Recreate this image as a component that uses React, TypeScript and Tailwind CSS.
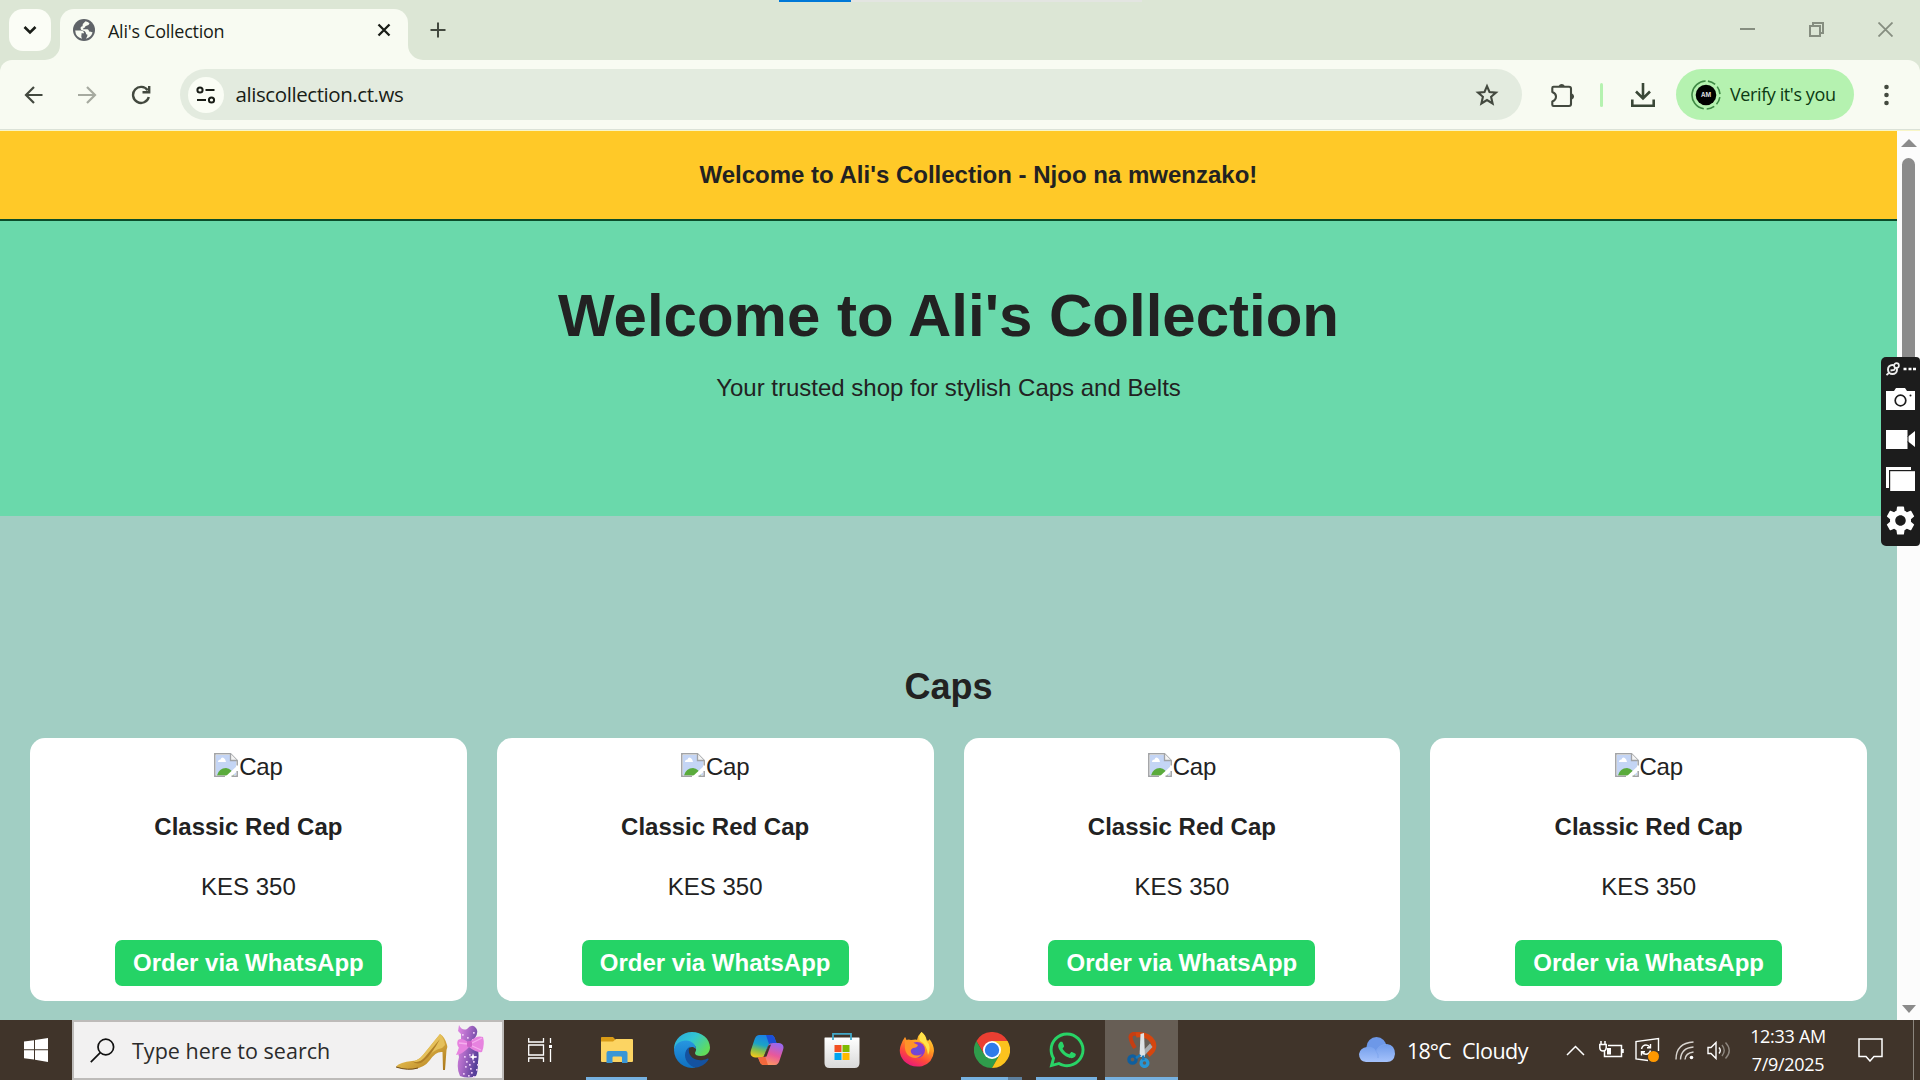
import React from "react";
import { FaWhatsapp } from "react-icons/fa";
import { MdSettings } from "react-icons/md";

const ui = "font-['Open_Sans','Noto_Sans',sans-serif]";

function TabStrip() {
  return (
    <div className="relative flex h-[60px] shrink-0 bg-[#dce6d5]">
      <div className="absolute left-[779px] top-0 flex h-[2px] w-[363px] bg-[#e3e5e1]">
        <div className="h-full w-[72px] bg-[#0078d7]" />
      </div>
      <div className="ml-[9px] mt-[9px] flex h-[42px] w-[42px] items-center justify-center rounded-[14px] bg-[#fbfdf6]">
        <svg width="14" height="10" viewBox="0 0 14 10" fill="none" stroke="#191d17" strokeWidth="2.6">
          <path d="M1.5 2 7 7.5 12.500 2" />
        </svg>
      </div>
      <div className="relative ml-[9px] mt-[9px] flex h-[51px] w-[348px] items-center rounded-t-[14px] bg-[#f8fbf2] pb-[9px]">
        <svg className="absolute -left-[15px] bottom-0" width="15" height="15">
          <path d="M15 0V15H0A15 15 0 0 0 15 0Z" fill="#f8fbf2" />
        </svg>
        <svg className="absolute -right-[15px] bottom-0" width="15" height="15">
          <path d="M0 0V15H15A15 15 0 0 1 0 0Z" fill="#f8fbf2" />
        </svg>
        <svg className="ml-[13px]" width="22" height="22" viewBox="0 0 22 22">
          <circle cx="11" cy="11" r="11" fill="#5f6368" />
          <path d="M11.500 2.200Q9.500 3 9.500 5 7.500 5 7.500 7.500 7.500 8.500 9 8.500H12.500Q14 8.500 14 10.200 14 11.500 15.500 11.500H19.800A8.900 8.900 0 0 0 11.500 2.200Z" fill="#5f6368" />
          <path d="M2.200 11.500H7.500Q11 11.500 11 14.200H8.500V16.500H8.200Q8.200 18 9 19.700A8.900 8.900 0 0 1 2.200 11.500Z" fill="#f8fbf2" />
          <path d="M12.500 2.300Q15 2.800 16.500 4.200 16 6.500 13.500 6.800 12 6.800 12 8.500 10 8.500 10 10.300H14.500Q16 10.500 16 12.500 18 12.500 19.600 13.500 18 18.500 13 19.700 14.500 17.500 14.500 15.800 12.800 15.500 12.800 13.700 12.500 12 9.500 11.500 7.500 11 7.500 9 7.500 7.200 9.500 7.200 9.500 4.500 12.500 2.300Z" fill="#f8fbf2" />
        </svg>
        <span className="ml-[13px] mt-[2px] whitespace-nowrap text-[18px] leading-6 tracking-[-0.26px] text-[#191d17]">Ali's Collection</span>
        <svg className="absolute left-[317px] top-[14px]" width="14" height="14" fill="none" stroke="#191d17" strokeWidth="2.3">
          <path d="M1.500 1.500 12.500 12.500M12.500 1.500 1.500 12.500" />
        </svg>
      </div>
      <svg className="ml-[22px] mt-[22px]" width="16" height="16" fill="none" stroke="#43493f" strokeWidth="2">
        <path d="M8 .5V15.500M.5 8H15.500" />
      </svg>
      <div className="ml-auto mr-[27px] flex items-start gap-[54px] pt-[22px]">
        <svg width="15" height="15"><path d="M0 7H15" stroke="#868e80" strokeWidth="2" /></svg>
        <svg width="15" height="15" fill="none" stroke="#868e80" strokeWidth="2">
          <path d="M1 4H11V14H1ZM4 4V1H14V11H11" />
        </svg>
        <svg width="15" height="15" fill="none" stroke="#868e80" strokeWidth="1.8">
          <path d="M.5 .5 14.500 14.500M14.500 .5 .5 14.500" />
        </svg>
      </div>
    </div>
  );
}

function Toolbar() {
  return (
    <div className="h-[71px] shrink-0 bg-[#dce6d5]">
      <div className="flex h-[71px] items-center rounded-t-[12px] border-b border-[#f8f6c8] bg-[#f8fbf2]">
        <div className="flex h-[70px] w-full items-center border-b border-[#dbe2d8]">
          <svg className="ml-[24px]" width="19" height="18" fill="none" stroke="#43493f" strokeWidth="2.2">
            <path d="M18.500 9H2M10 1 2 9 10 17" />
          </svg>
          <svg className="ml-[35px]" width="19" height="18" fill="none" stroke="#a6aaa0" strokeWidth="2.2">
            <path d="M0 9H17M9 1 17 9 9 17" />
          </svg>
          <svg className="ml-[34px]" width="20" height="20" fill="none" stroke="#43493f" strokeWidth="2.4">
            <path d="M16.700 5.400A8 8 0 1 0 17.800 12" />
            <path d="M18.200 1V7.200H11.500" />
          </svg>
          <div className="ml-[29px] flex h-[51px] w-[1342px] items-center rounded-full bg-[#e3ebdf]">
            <div className="ml-[8px] flex h-[36px] w-[36px] items-center justify-center rounded-full bg-[#fafdf5]">
              <svg width="20" height="18" fill="none" stroke="#191d17" strokeWidth="2">
                <circle cx="4" cy="4" r="2.600" />
                <path d="M9.500 4H18.500M1 14H10" />
                <circle cx="15.500" cy="14" r="2.600" />
              </svg>
            </div>
            <span className="ml-[11.500px] -mt-[2px] whitespace-nowrap text-[20.500px] leading-7 tracking-[-0.42px] text-[#191d17]">aliscollection.ct.ws</span>
            <svg className="ml-auto mr-[23px]" width="24" height="24" viewBox="0 0 24 24" fill="none" stroke="#43493f" strokeWidth="2.1">
              <path d="M12 3.200 14.500 9 21 9.600 16.100 13.800 17.600 20.500 12 17 6.400 20.500 7.900 13.800 3 9.600 9.500 9Z" />
            </svg>
          </div>
          <svg className="ml-[28px]" width="26" height="26" viewBox="0 0 26 26">
            <path d="M3.500 4.800H19Q21 4.800 21 6.800V22Q21 24 19 24H3.500Q2.300 24 2.300 22.800V19.500Q6 18 6 14.500 6 11.500 2.300 10V6Q2.300 4.800 3.500 4.800Z" fill="none" stroke="#43493f" strokeWidth="2.1" strokeLinejoin="round" />
            <path d="M8.700 4A3.200 3.200 0 0 1 14.700 4ZM22 11.500A3.200 3.200 0 0 1 22 17.500Z" fill="#43493f" />
          </svg>
          <div className="ml-[24px] h-[24px] w-[3px] rounded-full bg-[#b5f2b0]" />
          <svg className="ml-[28px]" width="24" height="24" fill="none" stroke="#3a4737" strokeWidth="2.600">
            <path d="M12 0V14.500M5 8.500 12 15.500 19 8.500M1.300 16.500V22.700H22.700V16.500" />
          </svg>
          <div className="ml-[21px] flex h-[51px] w-[178px] shrink-0 items-center rounded-full bg-[#b5f2b0]">
            <svg className="ml-[15px] shrink-0" width="30" height="30" viewBox="0 0 30 30">
              <circle cx="15" cy="15" r="14" fill="none" stroke="#3f8a45" strokeWidth="1.600" strokeDasharray="8 3 8 3 8 3 8 3 41 3" transform="rotate(-82 15 15)" />
              <circle cx="15" cy="15" r="10.300" fill="#000" />
              <text x="15" y="17.300" textAnchor="middle" fontSize="6" fontWeight="700" fill="#ddd" fontFamily="Inter, sans-serif">AM</text>
            </svg>
            <span className="-mt-[2px] ml-[9px] whitespace-nowrap text-[18px] leading-6 tracking-[-0.4px] text-[#0c3a13]">Verify it's you</span>
          </div>
          <svg className="ml-[30px]" width="5" height="22" fill="#43493f">
            <circle cx="2.500" cy="3" r="2.300" /><circle cx="2.500" cy="11" r="2.300" /><circle cx="2.500" cy="19" r="2.300" />
          </svg>
        </div>
      </div>
    </div>
  );
}

function BrokenImage() {
  return (
    <svg width="24" height="24" viewBox="0 0 24 24">
      <path d="M.5 .5H16.500L23.500 7.500V23.500H.5Z" fill="#fff" />
      <path d="M2 2H16L22 8V22H2Z" fill="#c4d5f5" />
      <path d="M4 9Q4 6.500 6.500 6.500 7.500 3.500 9.800 5 11.500 6 12 9Z" fill="#fff" />
      <path d="M3 22.500Q5 15 12 15 18 15.500 20 22.500Z" fill="#5aab3c" />
      <path d="M11 24 24 12V17.500L17 24Z" fill="#fff" />
      <path d="M11 23.200H.8V.8H16.500L23.200 7.500V12.500M23.200 18V23.200H17.500" fill="none" stroke="#a1a3a6" strokeWidth="1.500" />
      <path d="M16.500 .8V7.500H23.200" fill="#f4f4f4" stroke="#a1a3a6" strokeWidth="1.300" />
    </svg>
  );
}

function ProductCard() {
  return (
    <div className="flex h-[263px] flex-1 flex-col items-center rounded-[15px] bg-white pt-[15px] text-2xl leading-7 text-[#222]">
      <div className="flex h-7">
        <BrokenImage />
        <span className="ml-[1px] tracking-[-0.3px]">Cap</span>
      </div>
      <h3 className="mt-[32px] h-7 font-bold">Classic Red Cap</h3>
      <p className="mt-8 h-7">KES 350</p>
      <a className="mt-[39px] flex h-[46px] w-[267px] items-center justify-center rounded-[7px] bg-[#25d366] font-bold text-white">
        Order via WhatsApp
      </a>
    </div>
  );
}

function Page() {
  return (
    <div className="flex min-h-0 flex-1">
      <main className="flex w-[1897px] flex-col bg-[#a1cec3] font-['Liberation_Sans',Arial,sans-serif] text-[#222]">
        <div className="flex h-[90px] items-center border-b-2 border-[#0b4d2a] bg-[#ffc928] pl-[699.500px] text-2xl font-bold">
          <span className="whitespace-nowrap pb-px">Welcome to Ali's Collection - Njoo na mwenzako!</span>
        </div>
        <header className="flex h-[295px] flex-col items-center bg-[#6ad9ab] pt-[61px]">
          <h1 className="text-[60px] font-bold leading-[68px]">Welcome to Ali's Collection</h1>
          <p className="mt-[24px] text-2xl leading-7">Your trusted shop for stylish Caps and Belts</p>
        </header>
        <h2 className="mt-[150px] text-center text-4xl font-bold leading-[42px]">Caps</h2>
        <div className="mt-[30px] flex gap-[30px] px-[30px]">
          <ProductCard /><ProductCard /><ProductCard /><ProductCard />
        </div>
      </main>
      <div className="flex w-[23px] flex-col items-center bg-[#fcfcfc] pt-[8px]">
        <svg width="16" height="8"><path d="M0 8 8 0 16 8Z" fill="#8b8b8b" /></svg>
        <div className="mt-[11px] h-[260px] w-[13px] rounded-full bg-[#8b8b8b]" />
        <svg className="mb-[7px] mt-auto" width="14" height="8"><path d="M0 0 7 8 14 0Z" fill="#8b8b8b" /></svg>
      </div>
    </div>
  );
}

function CaptureWidget() {
  return (
    <div className="absolute right-0 top-[357px] flex h-[189px] w-[39px] flex-col items-center rounded-l-[5px] rounded-r-[4px] bg-[#1c1c1c]">
      <svg className="mt-[5px]" width="30" height="14" viewBox="0 0 30 14" fill="none">
        <circle cx="6.500" cy="7.500" r="4.500" stroke="#eee" strokeWidth="2" />
        <path d="M.5 13 3.500 10.500M4.500 8.500 8 8 10 5" stroke="#eee" strokeWidth="1.800" />
        <circle cx="10.500" cy="3.500" r="2.400" fill="#1c1c1c" stroke="#eee" strokeWidth="1.700" />
        <path d="M17.500 7H20.500M22.500 7H25.500M27 7H30" stroke="#fff" strokeWidth="2.600" />
      </svg>
      <svg className="mt-[12px]" width="29" height="22" viewBox="0 0 29 22">
        <path d="M0 3H8L10 0H19L21 3H29V22H0Z" fill="#fff" />
        <circle cx="14.500" cy="12.500" r="5.300" fill="none" stroke="#1c1c1c" strokeWidth="1.700" />
        <circle cx="24.500" cy="7.500" r="1" fill="#1c1c1c" />
      </svg>
      <svg className="mt-[20px]" width="29" height="19" viewBox="0 0 29 19" fill="#fff">
        <path d="M0 0H21.500V7L29 1V17L21.500 11V19H0Z" />
        <path d="M22 6V12.500" stroke="#1c1c1c" strokeWidth="1" />
      </svg>
      <svg className="mt-[18px]" width="29" height="24" viewBox="0 0 29 24">
        <path d="M0 0H25V3H3V21H0Z" fill="#fff" />
        <path d="M4.200 4.200H29V24H4.200Z" fill="#fff" />
      </svg>
      <MdSettings className="mr-px mt-[12px] h-[35px] w-[35px] shrink-0 text-white" />
    </div>
  );
}

function Shoe() {
  return (
    <svg className="absolute left-[322px] top-[12px]" width="52" height="38" viewBox="0 0 52 38">
      <defs>
        <linearGradient id="gold" x1="0" y1="0" x2="1" y2="1">
          <stop offset="0" stopColor="#f4dc83" /><stop offset=".5" stopColor="#d9ad42" /><stop offset="1" stopColor="#a87519" />
        </linearGradient>
      </defs>
      <path d="M44 0Q49 3 51 11 52 13 50.500 16L49 36H47L46.500 18Q40 17 34 26 28 34 18 35 6 36 0 32.500 4 28 16 27 22 27 27 21Z" fill="url(#gold)" />
      <path d="M44 0Q48 4 49 11L46 14Q36 16 28 27 24 30 16 27 22 27 27 21Z" fill="#e5c05a" />
      <path d="M16 27Q23 30 29 23L44 5Q36 20 28 27 22 32 16 27Z" fill="#b18027" />
      <path d="M0 33Q12 37 22 34" fill="none" stroke="#6f4a16" strokeWidth="1" />
    </svg>
  );
}

const sequins = [
  [9, 33], [14, 31], [18, 38], [10, 43], [15, 45], [21, 46], [8, 50], [13, 52], [18, 53], [22, 41], [20, 33], [11, 38], [16, 49], [7, 11], [12, 14], [18, 9], [17, 16], [14, 41],
];

function Dress() {
  return (
    <svg className="absolute left-[382px] top-[2px]" width="32" height="54" viewBox="0 0 32 54">
      <defs>
        <linearGradient id="gown" x1="0" y1="0" x2="1" y2=".5">
          <stop offset="0" stopColor="#e58be6" /><stop offset=".5" stopColor="#a767c4" /><stop offset="1" stopColor="#57409a" />
        </linearGradient>
      </defs>
      <path d="M3 1Q6 7 11 5 16-1 20 4 23 8 19 14V19Q24 26 22 38 22 48 20 52 12 55 4 52 0 44 3 33 1 26 5 19L5 10 2 7Z" fill="url(#gown)" />
      {sequins.map(([x, y], i) => (
        <rect key={i} x={x - 1} y={y - 1} width="1.700" height="1.700" fill="#ecc8f5" />
      ))}
      <path d="M13 19Q6 13 2 16 0 20 3 24L0 31Q7 30 13 23Q20 29 26 28 29 20 27 13 20 11 14 18Z" fill="#e783df" />
      <path d="M14 20 26 14M14 21 25 26M12 20 3 19" stroke="#f5aeee" strokeWidth="1.300" />
      <rect x="11" y="17" width="5" height="6" rx="1.500" fill="#cf62c9" />
      <path d="M17 29 18 32 21 33 18 34 17 37 16 34 13 33 16 32Z" fill="#fff" />
    </svg>
  );
}

function FolderIcon() {
  return (
    <svg width="36" height="36" viewBox="0 0 36 36">
      <path d="M2 5.500Q2 5 3 5H14L17 8H33Q34 8 34 9V14H2Z" fill="#d99b16" />
      <path d="M2 9.500H14L17 7H33Q34 7 34 8V29Q34 30 33 30H3Q2 30 2 29Z" fill="#fcd462" />
      <path d="M7.500 31V21Q7.500 19 9.500 19H26.500Q28.500 19 28.500 21V31H23V25.500Q23 24.500 22 24.500H14.500Q13.500 24.500 13.500 25.500V31Z" fill="#3a96d5" />
    </svg>
  );
}

function EdgeIcon() {
  return (
    <svg width="36" height="36" viewBox="0 0 36 36">
      <defs>
        <linearGradient id="eTop" x1="0" y1="0" x2="1" y2=".6"><stop offset="0" stopColor="#2aa7dc" /><stop offset=".5" stopColor="#32c5d4" /><stop offset="1" stopColor="#61dc5a" /></linearGradient>
        <linearGradient id="eMid" x1="0" y1="0" x2="0" y2="1"><stop offset="0" stopColor="#2796e0" /><stop offset="1" stopColor="#0f70c0" /></linearGradient>
      </defs>
      <path d="M0 16.500A18 17 0 0 1 18 0C28 0 36 7 36 15.500 36 20.500 32 24 27 24 22 24 20 22 21.500 19.800 23 17 22 11 14 10.500 7 10 2 13 0 18Z" fill="url(#eTop)" />
      <path d="M0 18C1 12 6 8.500 12 8.500 18 8.500 22 13 22 17 18 12.500 12 16 12 22 12 29 17 34 22 35.500A18 18 0 0 1 0 18Z" fill="url(#eMid)" />
      <path d="M16 14.500C10 18 9.500 26 14 31 17 35 22 36.500 26 34.500 30 33 33 30 34.500 27.500 35 26.500 34 26.200 33 26.700 26 30 18 27.500 15.500 22 14.500 19 14.500 17 16 14.500Z" fill="#1452a0" />
    </svg>
  );
}

function CopilotIcon() {
  return (
    <svg width="36" height="36" viewBox="0 0 36 36">
      <defs>
        <linearGradient id="cpA" x1=".6" y1="0" x2=".3" y2="1"><stop offset="0" stopColor="#1b7fe8" /><stop offset=".45" stopColor="#1ba3c7" /><stop offset=".7" stopColor="#80bd4f" /><stop offset="1" stopColor="#f2c81c" /></linearGradient>
        <linearGradient id="cpB" x1=".7" y1="0" x2=".3" y2="1"><stop offset="0" stopColor="#9868f0" /><stop offset=".5" stopColor="#e8589b" /><stop offset="1" stopColor="#ffa05a" /></linearGradient>
      </defs>
      <path d="M10 3H22Q25 3 26 7L27.500 11H23Q20 11 18.500 15L15 24Q14 25.500 11 25.500H6Q0 25 2 18L5 9Q6.500 3 10 3Z" fill="url(#cpA)" />
      <path d="M17 3H22Q25 3 26 7L27.500 11H23L20 12Z" fill="#1c4ed8" />
      <path d="M26 33H15Q11.500 33 10.500 29L9 25.500H12Q15 25.500 16.500 21L19.500 13Q20.500 11 24 11H30Q36 12 34 18L31 27Q29.500 33 26 33Z" fill="url(#cpB)" />
      <path d="M19 33H15Q11.500 33 10.500 29L9 25.500H12L16 24Z" fill="#f2683c" />
      <path d="M19.500 13.500 22 12.500 17.500 24.500 14.500 25Z" fill="#40342a" />
    </svg>
  );
}

function StoreIcon() {
  return (
    <svg width="36" height="36" viewBox="0 0 36 36">
      <defs><linearGradient id="bag" x1="0" y1="0" x2="0" y2="1"><stop offset="0" stopColor="#fff" /><stop offset="1" stopColor="#d9d9d9" /></linearGradient></defs>
      <path d="M.5 6Q.5 5.500 1 5.500H35Q35.500 5.500 35.500 6V31Q35.500 36 30.500 36H5.500Q.5 36 .5 31Z" fill="url(#bag)" />
      <path d="M9 8V1.800H27V8" fill="none" stroke="#43a9c9" strokeWidth="1.800" />
      <path d="M10.500 13H17.500V20H10.500Z" fill="#f25022" /><path d="M18.500 13H25.500V20H18.500Z" fill="#7fba00" />
      <path d="M10.500 21H17.500V28H10.500Z" fill="#00a4ef" /><path d="M18.500 21H25.500V28H18.500Z" fill="#ffb900" />
    </svg>
  );
}

function FirefoxIcon() {
  return (
    <svg width="36" height="36" viewBox="0 0 36 36">
      <defs>
        <linearGradient id="fx" x1=".8" y1="0" x2=".3" y2="1"><stop offset="0" stopColor="#ffe03a" /><stop offset=".4" stopColor="#ff9a20" /><stop offset=".7" stopColor="#ff4a3a" /><stop offset="1" stopColor="#e7167f" /></linearGradient>
        <radialGradient id="fxc"><stop offset="0" stopColor="#5b54e0" /><stop offset="1" stopColor="#9038c8" /></radialGradient>
      </defs>
      <path d="M22.500 0Q27 3 27.500 8 30 9.500 30.500 7 35 13 35 19 34 31 23 34.200 12 36 5 29 -1 22 1.500 14 3 9 6 5L7 8Q10 7 12 8 18 7 18 8 19 3 22.500 0Z" fill="url(#fx)" />
      <circle cx="18" cy="18" r="8" fill="url(#fxc)" />
      <path d="M6 5 8 9Q13 7 15 11L19 13Q18 16 14 16 10 18 13 22 18 25 23 22 18 29 10 24 5 20 6 12Z" fill="#ff9429" />
      <path d="M22.500 0Q27 4 27.500 9 33 14 29 23 28 12 21 9 19 4 22.500 0Z" fill="#ffe34a" />
    </svg>
  );
}

function ChromeIcon() {
  return (
    <svg width="36" height="36" viewBox="0 0 36 36">
      <path d="M2.400 9A18 18 0 0 1 33.600 9H18L10.200 22.500Z" fill="#ea3f32" />
      <path d="M2.400 9A18 18 0 0 0 18 36L25.800 22.500 10.200 22.500Z" fill="#2f9c4b" />
      <path d="M33.600 9A18 18 0 0 1 18 36L25.800 22.500 18 9Z" fill="#fcc31e" />
      <circle cx="18" cy="18" r="9" fill="#fff" />
      <circle cx="18" cy="18" r="7.200" fill="#2f7bea" />
    </svg>
  );
}

function SnipIcon() {
  return (
    <svg width="36" height="36" viewBox="0 0 36 36" fill="none">
      <path d="M17 2.500Q7 0 6.500 5 7 10 11 16" stroke="#c63e12" strokeWidth="4" />
      <path d="M12 3Q24 1 29 10 32 17 24 23" stroke="#d5460f" strokeWidth="5" />
      <path d="M17 21 26 11.500 28.500 15 19 25Z" fill="#a9adb0" />
      <path d="M16.500 2 20 1 21 25H15.500Z" fill="#dfe3e5" />
      <circle cx="8.500" cy="27.500" r="3.600" stroke="#0f5f9f" strokeWidth="3.300" />
      <circle cx="20.500" cy="31" r="3.400" stroke="#2796d6" strokeWidth="3.300" />
      <path d="M12 26 16.500 23M19 23.500 19.500 28" stroke="#1979ba" strokeWidth="2.600" />
    </svg>
  );
}

type AppProps = { children: React.ReactNode; state?: "open" | "stacked" | "active" };

function TaskApp({ children, state }: AppProps) {
  return (
    <div className={`flex h-full w-[73px] shrink-0 flex-col items-center pt-[12px] ${state === "active" ? "bg-[#675e55]" : ""}`}>
      {children}
      {state === "open" && <div className="mt-auto h-[3px] w-[61px] bg-[#76b1e0]" />}
      {state === "active" && <div className="mt-auto h-[3px] w-[73px] bg-[#76b1e0]" />}
      {state === "stacked" && (
        <div className="mt-auto flex h-[3px] w-[61px] bg-[#5d7f9d]"><div className="w-[47px] bg-[#76b1e0]" /></div>
      )}
    </div>
  );
}

function Tray() {
  return (
    <div className="flex h-full items-center text-white">
      <svg width="36" height="27" viewBox="0 0 36 27">
        <defs><linearGradient id="cl" x1="0" y1="0" x2="0" y2="1"><stop offset="0" stopColor="#6f9bea" /><stop offset="1" stopColor="#a5c2fb" /></linearGradient></defs>
        <circle cx="17.500" cy="10" r="10" fill="#6d98e8" />
        <path d="M8 10Q14 9 17 14 20 7 28 7 36 8 36 17 35 25 28 25H7Q0 24 0 17 1 11 8 10Z" fill="url(#cl)" />
        <path d="M17 14Q20 18 19 21M27 7.500Q20 8 17 14" fill="none" stroke="#7ea5ee" strokeWidth="1" />
      </svg>
      <span className="ml-[12px] w-[55px] whitespace-nowrap pt-[2px] text-[21.500px] tracking-[-0.9px]">18°C</span>
      <span className="w-[104px] whitespace-nowrap pt-[2px] text-[21.500px] tracking-[-0.5px]">Cloudy</span>
      <svg width="19" height="11" fill="none" stroke="#fff" strokeWidth="1.500"><path d="M1 10 9.500 1.500 18 10" /></svg>
      <svg className="ml-[14px]" width="25" height="18" fill="none" stroke="#fff" strokeWidth="1.500">
        <path d="M9 4.500H22.500V15.500H5.500V10M24 8V12" />
        <path d="M2 0V3M6 0V3M.8 3.500H7.200V7Q7 10 4 10 1 10 .8 7Z" />
        <path d="M8 7H12V13.500H8Z" fill="#fff" stroke="none" />
      </svg>
      <svg className="ml-[11px]" width="25" height="26" fill="none" stroke="#fff" strokeWidth="1.400">
        <path d="M13 23.500 1 22V4.500L23.500 1.500V14" />
        <path d="M6.500 12Q7.500 8 11 8 13.500 8 15 10.500M15.500 7V10.800H12M15.500 13.500Q14.500 17 11 17.300 8.500 17.300 7 15M6.500 18.500V14.800H10" />
        <circle cx="18.500" cy="19.500" r="5.500" fill="#ff9800" stroke="none" />
      </svg>
      <svg className="ml-[15px]" width="19" height="19" fill="none" stroke="#d8d4cf" strokeWidth="1.400">
        <path d="M1 18.500Q1 2 18.500 1M5.500 18.500Q6 7 18.500 6M10 18.500Q10.500 12 18.500 11" />
        <circle cx="16.500" cy="16.500" r="1.800" fill="#fff" stroke="none" />
      </svg>
      <svg className="ml-[13px]" width="24" height="19" fill="none" stroke="#fff" strokeWidth="1.400">
        <path d="M1 6.500H4L9 1.500V17.500L4 12.500H1ZM12 6.500Q14.500 9.500 12 12.500" />
        <path d="M15 4Q19.500 9.500 15 15M18.500 1.500Q26 9.500 18.500 17.500" stroke="#8d867e" />
      </svg>
      <div className="ml-[13px] flex w-[88px] flex-col items-center whitespace-nowrap text-[18px] leading-[28px] tracking-[-0.3px]">
        <span>12:33 AM</span>
        <span>7/9/2025</span>
      </div>
      <svg className="ml-[26px]" width="25" height="24" fill="none" stroke="#fff" strokeWidth="1.500">
        <path d="M1 1H24V18.500H16L12 23 8 18.500H1Z" />
      </svg>
      <div className="ml-[30px] h-full w-px bg-[#8b857d]" />
      <div className="w-[6px]" />
    </div>
  );
}

function Taskbar() {
  return (
    <div className="flex h-[60px] shrink-0 items-center bg-[#40342a]">
      <div className="flex w-[72px] justify-center">
        <svg width="24" height="24" viewBox="0 0 24 24" fill="#fff">
          <path d="M0 3.500 10 2.200V11.300H0ZM11 2 24 0V11.300H11ZM0 12.300H10V21.500L0 20.200ZM11 12.300H24V24L11 21.800Z" />
        </svg>
      </div>
      <div className="relative flex h-[60px] w-[432px] items-center border-2 border-[#bdbbb9] bg-[#f2f1f1]">
        <svg className="ml-[16px]" width="25" height="25" fill="none" stroke="#111" strokeWidth="1.700">
          <circle cx="15.800" cy="9" r="7.800" /><path d="M10.300 14.700 .8 24.200" />
        </svg>
        <span className="ml-[17px] whitespace-nowrap pt-[3px] text-[21.500px] tracking-[0.02px] text-[#2b2b2b]">Type here to search</span>
        <Shoe />
        <Dress />
      </div>
      <div className="flex w-[76px] pl-[24px]">
        <svg width="24" height="24" fill="none" stroke="#fff" strokeWidth="1.300">
          <path d="M.7 0V4H15.500V0M.7 7H15.500V17H.7ZM.7 24V20H15.500V24M22.500 0V5M22.500 11V24" />
          <path d="M21 7H24V10H21Z" fill="#fff" stroke="none" />
        </svg>
      </div>
      <div className="flex h-full gap-[2px]">
        <TaskApp state="open"><FolderIcon /></TaskApp>
        <TaskApp><EdgeIcon /></TaskApp>
        <TaskApp><CopilotIcon /></TaskApp>
        <TaskApp><StoreIcon /></TaskApp>
        <TaskApp><FirefoxIcon /></TaskApp>
        <TaskApp state="stacked"><ChromeIcon /></TaskApp>
        <TaskApp state="open"><FaWhatsapp className="h-[40px] w-[40px] -mt-[2px] shrink-0 text-[#28d366]" /></TaskApp>
        <TaskApp state="active"><SnipIcon /></TaskApp>
      </div>
      <div className="ml-auto h-full"><Tray /></div>
    </div>
  );
}

export default function App() {
  return (
    <div className={`relative flex h-[1080px] w-[1920px] flex-col overflow-hidden ${ui}`}>
      <TabStrip />
      <Toolbar />
      <Page />
      <Taskbar />
      <CaptureWidget />
    </div>
  );
}
